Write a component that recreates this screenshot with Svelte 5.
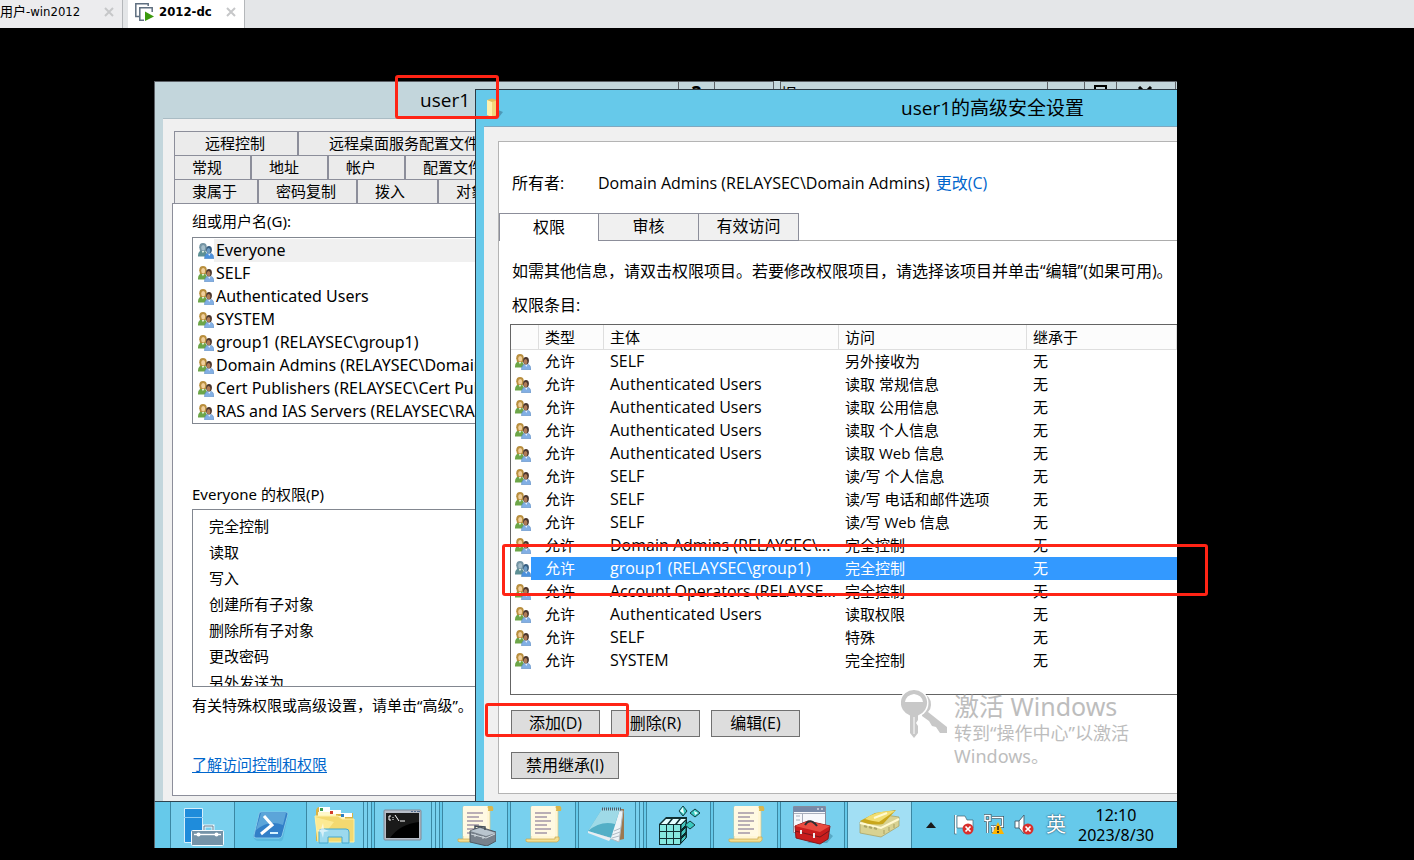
<script lang="ts">
  type Person = { name: string; active?: boolean };
  type Entry = { who: string; access: string; selected?: boolean };
  type Task = { icon: string; label: string; stack?: number; plain?: boolean; active?: boolean; width: number };

  const tabRows = [
    { wide: true, tabs: [{ text: '远程控制', width: 124 }, { text: '远程桌面服务配置文件', width: 212 }] },
    {
      wide: false,
      tabs: [
        { text: '常规', width: 77 },
        { text: '地址', width: 77 },
        { text: '帐户', width: 77 },
        { text: '配置文件', width: 105 },
      ],
    },
    {
      wide: false,
      tabs: [
        { text: '隶属于', width: 84 },
        { text: '密码复制', width: 99 },
        { text: '拨入', width: 81 },
        { text: '对象', width: 72 },
      ],
    },
  ];

  const people: Person[] = [
    { name: 'Everyone', active: true },
    { name: 'SELF' },
    { name: 'Authenticated Users' },
    { name: 'SYSTEM' },
    { name: 'group1 (RELAYSEC\\group1)' },
    { name: 'Domain Admins (RELAYSEC\\Domain Admins)' },
    { name: 'Cert Publishers (RELAYSEC\\Cert Publishers)' },
    { name: 'RAS and IAS Servers (RELAYSEC\\RAS and IAS Servers)' },
  ];

  const rights = ['完全控制', '读取', '写入', '创建所有子对象', '删除所有子对象', '更改密码', '另外发送为'];

  const entries: Entry[] = [
    { who: 'SELF', access: '另外接收为' },
    { who: 'Authenticated Users', access: '读取 常规信息' },
    { who: 'Authenticated Users', access: '读取 公用信息' },
    { who: 'Authenticated Users', access: '读取 个人信息' },
    { who: 'Authenticated Users', access: '读取 Web 信息' },
    { who: 'SELF', access: '读/写 个人信息' },
    { who: 'SELF', access: '读/写 电话和邮件选项' },
    { who: 'SELF', access: '读/写 Web 信息' },
    { who: 'Domain Admins (RELAYSEC\\...', access: '完全控制' },
    { who: 'group1 (RELAYSEC\\group1)', access: '完全控制', selected: true },
    { who: 'Account Operators (RELAYSE...', access: '完全控制' },
    { who: 'Authenticated Users', access: '读取权限' },
    { who: 'SELF', access: '特殊' },
    { who: 'SYSTEM', access: '完全控制' },
  ];

  const tasks: Task[] = [
    { icon: 'server', label: 'Server Manager', width: 65 },
    { icon: 'shell', label: 'PowerShell', plain: true, width: 67 },
    { icon: 'explorer', label: 'Explorer', stack: 2, width: 58 },
    { icon: 'cmd', label: 'Command Prompt', stack: 2, width: 58 },
    { icon: 'policy', label: 'Policy', width: 66 },
    { icon: 'scroll', label: 'Script', width: 66 },
    { icon: 'notepad', label: 'Notepad', stack: 2, width: 58 },
    { icon: 'registry', label: 'Registry', width: 65 },
    { icon: 'scroll', label: 'Script', width: 65 },
    { icon: 'toolbox', label: 'Console', width: 65 },
    { icon: 'ledger', label: 'Directory', active: true, width: 65 },
  ];
</script>

{#snippet users(tint = false)}
  <svg class="users" viewBox="0 0 16 16" aria-hidden="true">
    <path d="M0 13.500Q-.2 7.600 4.700 7q4.300.4 4.400 6.500z" fill={tint ? '#5d9095' : '#6da648'} />
    <path d="m3.600 7.500 1.300 2.800 1.800-2.800z" fill="#edf4e6" />
    <path d="M1.200 4.200Q1.200.1 5 0q3.900.1 3.800 4.300L8.200 8H2z" fill={tint ? '#7595a4' : '#b98f3e'} />
    <ellipse cx="5.200" cy="4.700" rx="2" ry="2.700" fill={tint ? '#a4bdc9' : '#f0cf9c'} />
    <path d="M6.500 15.800q-.2-5.600 4.800-5.900 4.800.3 4.600 5.900z" fill={tint ? '#4c91dd' : '#82afe4'} stroke="#4c7eb6" stroke-width=".5" />
    <path d="m10 10.300 1.200 2.600 1.500-2.600z" fill="#eef5ff" />
    <ellipse cx="11" cy="6.700" rx="2.900" ry="3.700" fill={tint ? '#365d80' : '#49352c'} />
    <ellipse cx="10.600" cy="7.700" rx="1.800" ry="2.600" fill={tint ? '#6c9cc5' : '#b07c58'} />
  </svg>
{/snippet}

{#snippet scroll()}
  <path d="M9 3h27v30q0 4-4 4H9z" fill="#fff6d5" stroke="#d8c88a" stroke-width=".7" />
  <path d="M32 2h6q2 1 1 5h-5q1-4-2-5z" fill="#d8b64e" />
  <path d="M10 2h24q-2 2-1 5v25H9V4q0-2 1-2z" fill="#fff9e2" />
  <path d="M13 9h16M13 13h12M13 17h16M13 21h12M13 25h16M13 29h12" stroke="#a295a6" stroke-width="1.3" />
  <path d="M4 35h29v-2h4q1 4-2 5H6q-3 0-2-3z" fill="#f3de91" stroke="#c8a84b" stroke-width=".7" />
{/snippet}

{#snippet taskIcon(kind: string)}
  <svg class="task-icon" viewBox="0 0 42 42" aria-hidden="true">
    {#if kind === 'server'}
      <path d="M2.500 4.500h18v34h-18z" fill="#1f8cdb" stroke="#d6effb" />
      <path d="M2 13.500h19" stroke="#8ccbf2" />
      <path d="M22 26v-4h9v4" fill="none" stroke="#eef8fc" stroke-width="3" />
      <path d="M22 26v-4h9v4" fill="none" stroke="#647f92" stroke-width="1" />
      <rect x="9.500" y="26.500" width="32" height="15" rx="1" fill="#7593a8" stroke="#f4fbff" />
      <path d="M12 30.500h27" stroke="#fff" stroke-width="1.400" />
      <circle cx="16.500" cy="30.500" r="2" fill="#fff" /><circle cx="34.500" cy="30.500" r="2" fill="#fff" />
    {:else if kind === 'shell'}
      <path d="M3 30Q9 35 29 35l5-23q3-3 4 0l-5 23q-1 3-4 2H7q-4-2-4-7z" fill="#49a8d1" opacity=".5" />
      <path d="M11 8h25q2 0 2 2l-6 22q-1 2-3 2H6q-3 0-2-3l5-21q0-2 2-2z" fill="#327fc8" stroke="#83c8e9" />
      <path d="M11 9h25l-3 12Q19 15 6 26z" fill="#6eb5df" opacity=".7" />
      <path d="m14 12 8 9-11 9" fill="none" stroke="#fff" stroke-width="3" /><path d="M20 29h8" stroke="#d5f3ff" stroke-width="2" />
    {:else if kind === 'explorer'}
      <path d="M2 37V6q1-3 3-3h9l2 3h9l2 3h12v29z" fill="#d9b345" />
      <path d="M4 8h18v5H4zM13 12h18v4H13z" fill="#fff8c9" />
      <path d="M5 3h11v5H5z" fill="#fff" /><path d="M6 4h3v3H6z" fill="#3d9d4f" /><path d="M16 6h11v4H16z" fill="#fff" /><path d="M16 7h3v3h-3z" fill="#d33c2b" /><path d="M27 9h11v4H27z" fill="#fff" /><path d="M27 10h3v3h-3z" fill="#2d7fc3" />
      <path d="M1 12h23l4 3h12v23H4z" fill="#f3d970" stroke="#fff0a5" /><path d="m1 13 19 5L4 38z" fill="#fff1a2" opacity=".7" />
      <path d="M5 39V28q0-3 3-3h24q3 0 3 3v11h-7v-6H14v6z" fill="#9bd9ee" stroke="#45a9cf" />
      <path d="m9 19 1 6 5 2-5 1-1 6-2-6-4-1 4-2z" fill="#fff" opacity=".6" />
    {:else if kind === 'cmd'}
      <rect x="2" y="6" width="37" height="30" rx="1" fill="#b7bdc7" stroke="#7e8895" />
      <path d="M4 9h33v25H4z" fill="#000" /><path d="M4 9h33v9Q18 20 8 34H4z" fill="#252525" opacity=".7" />
      <path d="M29 7.500h2m1 0h2m1 0h3" stroke="#536e91" />
      <path d="M9 12H7v4h2m2-3v1m0 1v1m2-5 4 6m1 0h5" fill="none" stroke="#fff" />
    {:else if kind === 'policy'}
      {@render scroll()}
      <path d="m16 27 10-4 16 5v9l-9 5-17-4z" fill="#77818b" stroke="#4f5962" /><path d="m16 27 10-3 16 5-10 3z" fill="#b9c5ce" />
      <path d="M21 25v-3l10 1v3" fill="none" stroke="#46505a" stroke-width="1.500" /><path d="m17 30 15 4 9-4M21 30v3m8-1v3" fill="none" stroke="#d2dbe0" />
    {:else if kind === 'scroll'}
      {@render scroll()}
    {:else if kind === 'notepad'}
      <path d="M35 5h3v30l-9 2z" fill="#9b7951" /><path d="M16 5 37 7l-4 31-20-8z" fill="#eef4f7" stroke="#b0bac0" />
      <path d="M16 5h18l-9 29L2 27z" fill="#53afc6" /><path d="M16 5h18l-5 15Q15 16 2 27z" fill="#b3e5ef" opacity=".8" />
      <path d="m2 27 23 7-2 3L2 29z" fill="#e8edf1" /><path d="m28 27 7-3m-9 7 8-3m-8 6 7-2" stroke="#b0bac3" />
      <path d="M16 5h20" stroke="#505c69" stroke-width="3" stroke-dasharray="1 1" />
    {:else if kind === 'registry'}
      <path d="m1 20 7-7h21v20l-7 8H1z" fill="#102f31" />
      <path d="M2 21h6v6H2zm7 0h6v6H9zM2 28h6v6H2zm7 0h6v6H9zM2 35h6v5H2zm7 0h6v5H9zm7-14h6v6h-6zm0 7h6v6h-6zm0 7h6v5h-6z" fill="#86e8df" />
      <path d="m3 20 5-5h5l-4 5zm8 0 4-5h6l-4 5zm8 0 4-5h5l-5 5z" fill="#e4ffff" /><path d="m23 21 5-5v5l-5 5zm0 7 5-5v5l-5 5zm0 7 5-5v4l-5 5z" fill="#48c7bf" stroke="#082729" />
      <path d="m25 2 4 5-4 5-4-5zm12 3 5 4-5 4-5-4zm-5 12 5 4-5 4-5-4z" fill="#39c9bf" stroke="#123e40" /><path d="m25 3 1 7-4-3zm11 4 4 2-3 2z" fill="#eaffff" />
    {:else if kind === 'toolbox'}
      <path d="M1.500 2.500h32v26h-32z" fill="#f7f8fc" stroke="#858c9d" /><path d="M1 3h32v5H1z" fill="#7789a7" /><path d="M2 9.500h31M10.500 9v19M4 12h4m-4 4h4" stroke="#a8aebc" /><path d="M25 5h2m2 0h2" stroke="#fff" />
      <path d="m36 28 5 4-6 7H15z" fill="#358099" opacity=".5" />
      <path d="m3 22 13-5 22 5-2 13-8 5L4 34z" fill="#c91d1d" stroke="#8b171a" /><path d="m3 22 13-5 22 5-10 6z" fill="#e94b40" /><path d="m3 27 25 6 9-6" fill="none" stroke="#77151a" />
      <path d="M13 21q5-8 12 1" fill="none" stroke="#2e3033" stroke-width="2" /><path d="M9 26v4m13-1v5" stroke="#eee" stroke-width="2" />
    {:else}
      <path d="m1 18 19-8 20 3v9L22 33 1 29z" fill="#d8d292" stroke="#a59c5b" stroke-width=".7" />
      <path d="m1 19 21 5 18-9" fill="none" stroke="#fff9d0" stroke-width="2" /><path d="m5 22 3 1m2 0 3 1m2 0 3 1" stroke="#aaa567" stroke-width="2" />
      <path d="m1 17 15-8 21-3-13 14Q12 22 1 17z" fill="#c9a71c" /><path d="M6 15Q17 6 36 7L20 18Q12 17 6 15z" fill="#f1de72" /><path d="m15 14 13-5" stroke="#fffad1" stroke-width="2" /><path d="M25 26v4m5-7v4m5-7v4" stroke="#a69f61" />
    {/if}
  </svg>
{/snippet}

{#snippet cross()}
  <svg class="cross" viewBox="0 0 10 10" aria-hidden="true"><path d="m1 1 8 8m0-8-8 8" stroke="#c6c7c9" stroke-width="2" /></svg>
{/snippet}

{#snippet errorBadge()}
  <circle cx="14" cy="15" r="5.500" fill="#d9302c" /><path d="m11.500 12.500 5 5m0-5-5 5" stroke="#fff" stroke-width="1.700" />
{/snippet}

<div class="viewer">
  <nav class="vm-tabs">
    <div class="vm-tab first">
      <button class="vm-name">用户-win2012</button>
      <button class="close" aria-label="关闭">{@render cross()}</button>
    </div>
    <div class="vm-tab current">
      <svg class="vm-icon" viewBox="0 0 19 18" aria-hidden="true">
        <path d="M4 13.500H.8V.8h12.400V3" fill="none" stroke="#5f6f80" stroke-width="1.500" />
        <path d="M9 17.200H4.800V4.800h12.400V9" fill="#fff" stroke="#5f6f80" stroke-width="1.500" />
        <path d="m10 8.500 9 5-9 4.500z" fill="#3c9a0d" />
      </svg>
      <button class="vm-name">2012-dc</button>
      <button class="close" aria-label="关闭">{@render cross()}</button>
    </div>
  </nav>

  <main class="screen">
    <div class="workspace">
      <div class="host">
        <span class="host-title">提</span>
        <span class="cap"></span>
        <span class="cap restore"><svg viewBox="0 0 16 14"><path d="M4 4V1h11v10h-4M1 5.500h10V13H1z" fill="none" stroke="#000" stroke-width="2" /></svg></span>
        <span class="cap shut"><svg viewBox="0 0 14 14"><path d="m1 1 12 12m0-12L1 13" stroke="#000" stroke-width="3" /></svg></span>
      </div>

      <section class="dialog">
        <header class="dialog-title">
          <h2>user1</h2>
          <span class="help">?</span>
          <span class="end"></span>
        </header>
        <div class="dialog-body">
          <div class="sheet-tabs">
            {#each tabRows as row}
              <div class="sheet-row" class:wide={row.wide}>
                {#each row.tabs as tab}
                  <button style:width="{tab.width}px">{tab.text}</button>
                {/each}
              </div>
            {/each}
          </div>
          <div class="sheet">
            <h3>组或用户名(G):</h3>
            <ul class="people">
              {#each people as person}
                <li class:active={person.active}>
                  {@render users(person.active)}
                  <span>{person.name}</span>
                </li>
              {/each}
            </ul>
            <h3 class="rights-label">Everyone 的权限(P)</h3>
            <ul class="rights">
              {#each rights as right}
                <li>{right}</li>
              {/each}
            </ul>
            <p class="note">有关特殊权限或高级设置，请单击“高级”。</p>
            <a class="learn" href="#learn">了解访问控制和权限</a>
          </div>
        </div>
      </section>

      <section class="advanced">
        <header class="advanced-title">
          <svg class="folder" viewBox="0 0 18 20" aria-hidden="true">
            <path d="m12 12 5 2-4 5H4z" fill="#3a7894" opacity=".6" />
            <path d="M1 2 6 .500l7 2V17L6 19l-5-2z" fill="#e2bd5b" /><path d="m1 2 5 2v15l-5-2z" fill="#fff1ae" /><path d="m6 4 6-2v14l-6 3z" fill="#f2d77d" />
          </svg>
          <h2>user1的高级安全设置</h2>
        </header>
        <div class="advanced-body">
          <div class="pane">
            <div class="owner">
              <span class="owner-label">所有者:</span>
              <span>Domain Admins (RELAYSEC\Domain Admins)</span>
              <a href="#change">更改(C)</a>
            </div>
            <div class="tabs">
              <button class="on">权限</button>
              <button>审核</button>
              <button>有效访问</button>
            </div>
            <p class="info">如需其他信息，请双击权限项目。若要修改权限项目，请选择该项目并单击“编辑”(如果可用)。</p>
            <p class="caption">权限条目:</p>
            <div class="grid">
              <table>
                <colgroup>
                  <col class="c-icon" /><col class="c-type" /><col class="c-who" /><col class="c-access" /><col />
                </colgroup>
                <thead>
                  <tr><th></th><th>类型</th><th>主体</th><th>访问</th><th>继承于</th></tr>
                </thead>
                <tbody>
                  {#each entries as entry}
                    <tr class:selected={entry.selected}>
                      <td>{@render users(entry.selected)}</td>
                      <td>允许</td>
                      <td class="who">{entry.who}</td>
                      <td>{entry.access}</td>
                      <td>无</td>
                    </tr>
                  {/each}
                </tbody>
              </table>
            </div>
            <div class="actions">
              <button>添加(D)</button>
              <button>删除(R)</button>
              <button>编辑(E)</button>
            </div>
            <div class="actions">
              <button class="inherit">禁用继承(I)</button>
            </div>
          </div>
        </div>
      </section>

      <aside class="watermark">
        <svg viewBox="0 0 46 48" aria-hidden="true">
          <path d="M20 3q10 2 10 12 0 4-3 7l19 15v6h-7l-4-6-4-1-3-5-7-5" fill="#c8c8c8" />
          <circle cx="13" cy="13" r="14.500" fill="#fff" />
          <path d="M13 0a13 13 0 0 1 4 25.400V30l-2 3 2 3v7l-4 5-4-5V25.400A13 13 0 0 1 13 0z" fill="#c8c8c8" />
          <path d="M4 12q1-7 9-8 8 1 9 8z" fill="#fff" />
          <path d="M13 27v17" stroke="#fff" />
        </svg>
        <div>
          <strong>激活 Windows</strong>
          <span>转到“操作中心”以激活</span>
          <span>Windows。</span>
        </div>
      </aside>
    </div>

    <footer class="taskbar">
      {#each tasks as task}
        <div class="slot">
          <button class="task" class:plain={task.plain} class:active={task.active} style:width="{task.width}px" aria-label={task.label}>
            {@render taskIcon(task.icon)}
          </button>
          {#each Array(task.stack ?? 0) as _}
            <i class="edge"></i>
          {/each}
        </div>
      {/each}
      <div class="tray">
        <svg class="up" viewBox="0 0 10 6" aria-hidden="true"><path d="m0 6 5-6 5 6z" fill="#1a1a1a" /></svg>
        <svg class="tray-icon" viewBox="0 0 20 21" aria-hidden="true">
          <path d="M1.500 1v19" stroke="#fff" stroke-width="2" /><path d="M.5 1v19h2" stroke="#44606d" fill="none" stroke-width=".7" />
          <path d="M3 2h8l2 4h6v8H3z" fill="#fff" stroke="#44606d" stroke-width=".7" />
          {@render errorBadge()}
        </svg>
        <svg class="tray-icon" viewBox="0 0 20 21" aria-hidden="true">
          <path d="M8 3.500h10.500v9H10M7 12.500h2v5h5" fill="none" stroke="#385a69" stroke-width="3" /><path d="M8 3.500h10.500v9H10M7 12.500h2v5h5" fill="none" stroke="#fff" stroke-width="1.500" />
          <path d="M1 1.500h5v5H1zM3.500 7v12" fill="none" stroke="#385a69" stroke-width="3" /><path d="M1 1.500h5v5H1zM3.500 7v12" fill="none" stroke="#fff" stroke-width="1.500" />
          <path d="m14 8 6 12H8z" fill="#ffb400" /><path d="M14 12v4m0 1v2" stroke="#222" stroke-width="1.600" />
        </svg>
        <svg class="tray-icon" viewBox="0 0 20 21" aria-hidden="true">
          <path d="M1 7h4l5-6v19l-5-6H1z" fill="#fff" stroke="#486776" /><path d="M5 7v7" stroke="#486776" />
          {@render errorBadge()}
        </svg>
        <span class="ime">英</span>
        <div class="clock"><span>12:10</span><span>2023/8/30</span></div>
      </div>
    </footer>

    <div class="mark mark-title"></div>
    <div class="mark mark-row"></div>
    <div class="mark mark-add"></div>
  </main>
</div>

<style>
  :global(body) {
    margin: 0;
    background: #000;
  }

  .viewer {
    overflow: hidden;
    background: #000;
    color: #000;
    font-family: 'Noto Sans', 'Noto Sans CJK SC', sans-serif;
    font-size: 15px;
    line-height: 20px;
  }

  h2,
  h3,
  p,
  ul {
    margin: 0;
    padding: 0;
    font-size: inherit;
    font-weight: 400;
    list-style: none;
  }

  button {
    padding: 0;
    border: 0;
    background: none;
    color: inherit;
    font: inherit;
    white-space: nowrap;
  }

  svg {
    display: block;
    flex-shrink: 0;
  }

  /* viewer tabs */
  .vm-tabs {
    display: flex;
    gap: 5px;
    height: 28px;
    background: #e4e6e8;
    font-family: 'DejaVu Sans Condensed', 'DejaVu Sans', 'Noto Sans CJK SC', sans-serif;
    font-size: 13px;
  }

  .vm-tab {
    display: flex;
    align-items: center;
    box-sizing: border-box;
    padding: 0 8px 5px 7px;
    border-right: 1px solid #b4b7ba;
  }

  .first {
    width: 123px;
    padding-left: 0;
    background: #ececee;
  }

  .current {
    width: 117px;
    background: #fff;
    font-weight: 700;
  }

  .vm-icon {
    width: 19px;
    height: 18px;
    margin-right: 5px;
  }

  .close {
    margin-left: auto;
  }

  .cross {
    width: 10px;
    height: 10px;
  }

  /* remote desktop */
  .screen {
    position: relative;
    margin: 53px 237px 12px 154px;
  }

  .workspace {
    position: relative;
    overflow: hidden;
    background: #c3d6dc;
  }

  .host {
    position: absolute;
    top: 0;
    right: 0;
    left: 626px;
    display: flex;
    box-sizing: border-box;
    height: 40px;
    padding-right: 1px;
    border-top: 1px solid #5c6066;
    border-left: 1px solid #5c6066;
  }

  .host-title {
    flex: 1;
    font-size: 16px;
    padding-top: 2px;
  }

  .cap {
    box-sizing: border-box;
    width: 37px;
    padding: 3px 6px;
    border-left: 1px solid #5c6066;
  }

  .cap svg {
    width: 16px;
    height: 14px;
  }

  .restore {
    width: 32px;
  }

  .shut {
    width: 60px;
    padding: 4px 20px;
    border-right: 1px solid #5c6066;
  }

  .dialog {
    position: relative;
    box-sizing: border-box;
    width: 620px;
    border: 1px solid #5c6066;
    border-bottom: 0;
    background: #c3d6dc;
  }

  .dialog-title,
  .advanced-title {
    font-family: 'Open Sans', 'Noto Sans CJK SC', sans-serif;
    font-size: 19px;
  }

  .dialog-title {
    display: flex;
    height: 36px;
    line-height: 37px;
  }

  .dialog-title h2 {
    flex: 1;
    padding-left: 265px;
  }

  .help {
    width: 35px;
    border-left: 1px solid #5c6066;
    font-weight: 700;
    line-height: 23px;
    text-align: center;
  }

  .end {
    width: 58px;
    border-left: 1px solid #5c6066;
  }

  .dialog-body {
    margin-left: 8px;
    padding: 12px 0 5px 9px;
    border-top: 1px solid #aabcc4;
    background: #f0f0f0;
  }

  .sheet-tabs {
    padding-left: 2px;
  }

  .sheet-row {
    display: flex;
    height: 24px;
  }

  .sheet-row button {
    box-sizing: border-box;
    padding: 0 0 2px 17px;
    border: 1px solid #8c8e9a;
    border-bottom: 0;
    background: #ebebeb;
    text-align: left;
  }

  .wide button {
    padding-left: 30px;
  }

  .sheet {
    padding: 7px 0 21px 19px;
    border: 1px solid #8c8e9a;
    background: #fff;
  }

  .people {
    margin-top: 6px;
    padding: 1px 0 0 5px;
    border: 1px solid #828790;
    overflow: hidden;
  }

  .people li {
    display: flex;
    align-items: center;
    height: 23px;
    font-size: 16px;
  }

  .people span {
    flex: 1;
    padding-left: 2px;
    line-height: 23px;
    white-space: nowrap;
  }

  .people .active span {
    background: #f0f0f0;
  }

  .users {
    width: 16px;
    height: 16px;
  }

  .rights-label {
    margin-top: 60px;
  }

  .rights {
    box-sizing: border-box;
    height: 178px;
    margin-top: 5px;
    padding: 3px 0 0 16px;
    border: 1px solid #828790;
    line-height: 26px;
    overflow: hidden;
  }

  .note {
    margin-top: 8px;
  }

  .learn {
    display: block;
    width: fit-content;
    margin-top: 39px;
    color: #0066cc;
    text-underline-offset: 2px;
  }

  /* advanced security window */
  .advanced {
    position: absolute;
    inset: 8px 0 0 321px;
    display: flex;
    flex-direction: column;
    border-top: 1px solid #2c3a44;
    border-left: 1px solid #2c3a44;
    background: #66c9ea;
    font-size: 16px;
  }

  .advanced-title {
    display: flex;
    align-items: center;
    height: 36px;
    padding-left: 10px;
  }

  .folder {
    width: 18px;
    height: 20px;
  }

  .advanced-title h2 {
    padding-left: 397px;
    white-space: nowrap;
  }

  .advanced-body {
    display: flex;
    flex: 1;
    margin-left: 8px;
    padding: 14px 0 7px 14px;
    border-top: 1px solid #7fa8c0;
    background: #f0f0f0;
  }

  .pane {
    flex: 1;
    min-width: 0;
    padding-top: 31px;
    border: 1px solid #b4b4b4;
    border-right: 0;
    background: #fff;
    font-family: 'Open Sans', 'Noto Sans CJK SC', sans-serif;
    white-space: nowrap;
  }

  .owner {
    display: flex;
    gap: 6px;
    padding-left: 13px;
  }

  .owner-label {
    width: 80px;
  }

  .owner a {
    color: #0066cc;
    text-decoration: none;
  }

  .tabs {
    display: flex;
    align-items: flex-end;
    height: 28px;
    margin-top: 20px;
    box-shadow: inset 0 -1px #acacac;
  }

  .tabs button {
    box-sizing: border-box;
    width: 100px;
    height: 28px;
    padding-bottom: 2px;
    border: 1px solid #8c8e9a;
    border-left: 0;
    background: #f0f0f0;
  }

  .tabs .on {
    border-left: 1px solid #8c8e9a;
    border-bottom: 0;
    background: #fff;
  }

  .info,
  .caption {
    padding-left: 13px;
  }

  .info {
    margin-top: 20px;
  }

  .caption {
    margin-top: 14px;
  }

  .grid {
    margin: 9px 0 0 11px;
    padding-bottom: 22px;
    border: 1px solid #646464;
    border-right: 0;
    font-size: 15px;
  }

  table {
    width: 100%;
    border-spacing: 0;
    table-layout: fixed;
  }

  .c-icon {
    width: 28px;
  }

  .c-type {
    width: 65px;
  }

  .c-who {
    width: 235px;
  }

  .c-access {
    width: 188px;
  }

  th {
    height: 24px;
    padding: 0 0 0 6px;
    border-right: 1px solid #dedede;
    border-bottom: 1px solid #dedede;
    background: #fcfcfc;
    font-weight: 400;
    text-align: left;
  }

  td {
    height: 23px;
    padding: 0 0 0 6px;
    line-height: 23px;
  }

  td:first-child {
    padding-left: 4px;
  }

  .who {
    font-size: 16px;
  }

  .selected td {
    background: #3399ff;
    color: #fff;
  }

  /* the highlight starts after the icon */
  .selected td:first-child {
    background: linear-gradient(to right, #fff 20px, #3399ff 20px);
  }

  .actions {
    display: flex;
    gap: 11px;
    margin: 15px 0 0 12px;
  }

  .actions button {
    box-sizing: border-box;
    width: 89px;
    height: 27px;
    padding-bottom: 2px;
    border: 1px solid #707070;
    background: #dddddd;
  }

  .actions .inherit {
    width: 108px;
  }

  .watermark {
    position: absolute;
    right: 48px;
    bottom: 33px;
    display: flex;
    gap: 7px;
    color: #bdbdbd;
    font-size: 18px;
    line-height: 23px;
    pointer-events: none;
  }

  .watermark svg {
    width: 46px;
    height: 48px;
  }

  .watermark strong,
  .watermark span {
    display: block;
    white-space: nowrap;
  }

  .watermark strong {
    font-size: 25px;
    font-weight: 400;
    line-height: 32px;
  }

  /* taskbar */
  .taskbar {
    display: flex;
    gap: 2px;
    box-sizing: border-box;
    height: 47px;
    padding-left: 15px;
    border-top: 1px solid #2f4450;
    border-left: 1px solid #5c6066;
    background: #66c9ea;
  }

  .slot {
    display: flex;
    flex-shrink: 0;
  }

  .task {
    display: flex;
    align-items: center;
    justify-content: center;
    box-sizing: border-box;
    border: 1px solid #3b87a3;
    border-width: 0 1px;
    background: #78d0ee;
  }

  .plain {
    border-color: transparent;
    background: none;
  }

  .active.task {
    background: #a2dff4;
  }

  .edge {
    width: 3px;
    border-right: 1px solid #3b87a3;
    background: #78d0ee;
  }

  .task-icon {
    width: 42px;
    height: 42px;
  }

  .tray {
    display: flex;
    flex: 1;
    align-items: center;
    padding: 0 0 1px 12px;
  }

  .up {
    width: 10px;
    height: 6px;
    margin-right: 18px;
  }

  .tray-icon {
    width: 20px;
    height: 21px;
    margin-right: 10px;
  }

  .ime {
    padding: 0 12px 0 2px;
    color: #fff;
    font-size: 20px;
    text-shadow: 0 0 2px #24526a, 0 0 1px #24526a;
  }

  .clock {
    display: flex;
    flex-direction: column;
    align-items: center;
    font-size: 16px;
  }

  /* red annotations over the desktop */
  .mark {
    position: absolute;
    box-sizing: border-box;
    border: 3px solid #ff2415;
    border-radius: 3px;
    pointer-events: none;
  }

  .mark-title {
    top: -6px;
    left: 241px;
    width: 104px;
    height: 44px;
  }

  .mark-row {
    top: 463px;
    right: -31px;
    left: 348px;
    height: 52px;
  }

  .mark-add {
    top: 622px;
    left: 331px;
    width: 144px;
    height: 34px;
  }
</style>
